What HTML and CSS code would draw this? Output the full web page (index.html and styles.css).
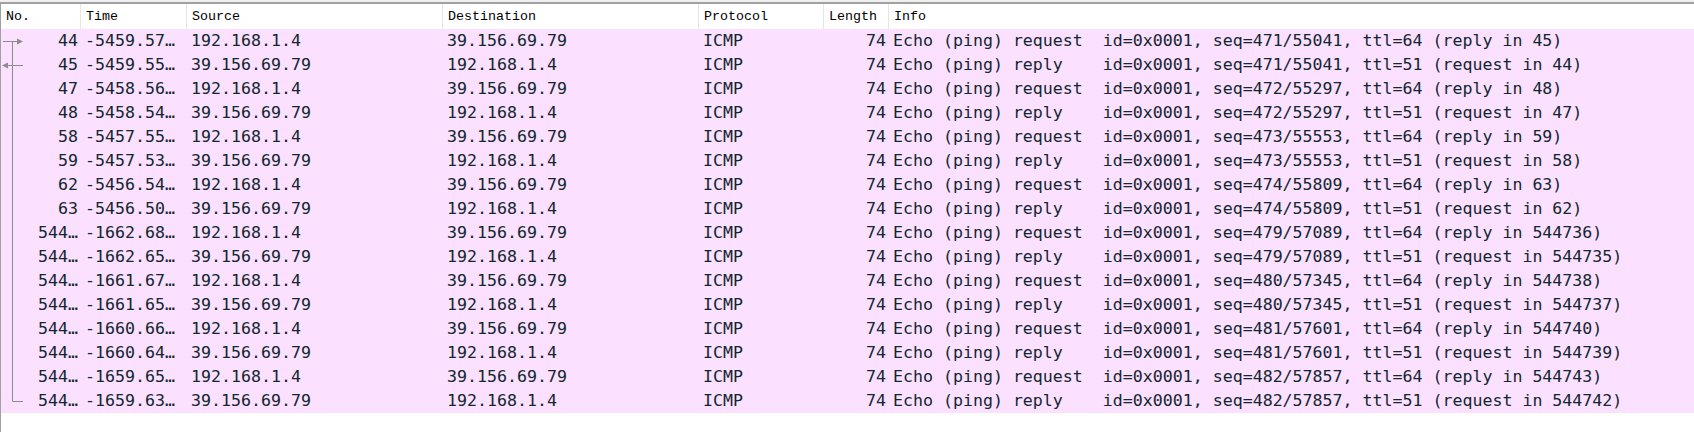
FILE: index.html
```html
<!DOCTYPE html>
<html>
<head>
<meta charset="utf-8">
<link rel="stylesheet" href="styles.css">
</head>
<body>
<div class="pane">
  <div class="row head">
    <div class="c">No.</div>
    <div class="c">Time</div>
    <div class="c">Source</div>
    <div class="c">Destination</div>
    <div class="c">Protocol</div>
    <div class="c">Length</div>
    <div class="c last">Info</div>
  </div>

  <div class="row pkt"><div class="c no"><svg class="rel" width="24" height="24"><line x1="2" y1="12.5" x2="17" y2="12.5"/><line x1="11.5" y1="12.5" x2="11.5" y2="24"/><polygon points="16,9.5 16,15.5 22,12.5"/></svg><span class="n">44</span></div><div class="c">-5459.57…</div><div class="c">192.168.1.4</div><div class="c">39.156.69.79</div><div class="c">ICMP</div><div class="c len">74</div><div class="c info">Echo (ping) request  id=0x0001, seq=471/55041, ttl=64 (reply in 45)</div></div>
  <div class="row pkt"><div class="c no"><svg class="rel" width="24" height="24"><line x1="6" y1="12.5" x2="22" y2="12.5"/><line x1="11.5" y1="0" x2="11.5" y2="24"/><polygon points="1,12.5 7,9.5 7,15.5"/></svg><span class="n">45</span></div><div class="c">-5459.55…</div><div class="c">39.156.69.79</div><div class="c">192.168.1.4</div><div class="c">ICMP</div><div class="c len">74</div><div class="c info">Echo (ping) reply    id=0x0001, seq=471/55041, ttl=51 (request in 44)</div></div>
  <div class="row pkt"><div class="c no"><svg class="rel" width="24" height="24"><line x1="11.5" y1="0" x2="11.5" y2="24"/></svg><span class="n">47</span></div><div class="c">-5458.56…</div><div class="c">192.168.1.4</div><div class="c">39.156.69.79</div><div class="c">ICMP</div><div class="c len">74</div><div class="c info">Echo (ping) request  id=0x0001, seq=472/55297, ttl=64 (reply in 48)</div></div>
  <div class="row pkt"><div class="c no"><svg class="rel" width="24" height="24"><line x1="11.5" y1="0" x2="11.5" y2="24"/></svg><span class="n">48</span></div><div class="c">-5458.54…</div><div class="c">39.156.69.79</div><div class="c">192.168.1.4</div><div class="c">ICMP</div><div class="c len">74</div><div class="c info">Echo (ping) reply    id=0x0001, seq=472/55297, ttl=51 (request in 47)</div></div>
  <div class="row pkt"><div class="c no"><svg class="rel" width="24" height="24"><line x1="11.5" y1="0" x2="11.5" y2="24"/></svg><span class="n">58</span></div><div class="c">-5457.55…</div><div class="c">192.168.1.4</div><div class="c">39.156.69.79</div><div class="c">ICMP</div><div class="c len">74</div><div class="c info">Echo (ping) request  id=0x0001, seq=473/55553, ttl=64 (reply in 59)</div></div>
  <div class="row pkt"><div class="c no"><svg class="rel" width="24" height="24"><line x1="11.5" y1="0" x2="11.5" y2="24"/></svg><span class="n">59</span></div><div class="c">-5457.53…</div><div class="c">39.156.69.79</div><div class="c">192.168.1.4</div><div class="c">ICMP</div><div class="c len">74</div><div class="c info">Echo (ping) reply    id=0x0001, seq=473/55553, ttl=51 (request in 58)</div></div>
  <div class="row pkt"><div class="c no"><svg class="rel" width="24" height="24"><line x1="11.5" y1="0" x2="11.5" y2="24"/></svg><span class="n">62</span></div><div class="c">-5456.54…</div><div class="c">192.168.1.4</div><div class="c">39.156.69.79</div><div class="c">ICMP</div><div class="c len">74</div><div class="c info">Echo (ping) request  id=0x0001, seq=474/55809, ttl=64 (reply in 63)</div></div>
  <div class="row pkt"><div class="c no"><svg class="rel" width="24" height="24"><line x1="11.5" y1="0" x2="11.5" y2="24"/></svg><span class="n">63</span></div><div class="c">-5456.50…</div><div class="c">39.156.69.79</div><div class="c">192.168.1.4</div><div class="c">ICMP</div><div class="c len">74</div><div class="c info">Echo (ping) reply    id=0x0001, seq=474/55809, ttl=51 (request in 62)</div></div>
  <div class="row pkt"><div class="c no"><svg class="rel" width="24" height="24"><line x1="11.5" y1="0" x2="11.5" y2="24"/></svg><span class="n">544…</span></div><div class="c">-1662.68…</div><div class="c">192.168.1.4</div><div class="c">39.156.69.79</div><div class="c">ICMP</div><div class="c len">74</div><div class="c info">Echo (ping) request  id=0x0001, seq=479/57089, ttl=64 (reply in 544736)</div></div>
  <div class="row pkt"><div class="c no"><svg class="rel" width="24" height="24"><line x1="11.5" y1="0" x2="11.5" y2="24"/></svg><span class="n">544…</span></div><div class="c">-1662.65…</div><div class="c">39.156.69.79</div><div class="c">192.168.1.4</div><div class="c">ICMP</div><div class="c len">74</div><div class="c info">Echo (ping) reply    id=0x0001, seq=479/57089, ttl=51 (request in 544735)</div></div>
  <div class="row pkt"><div class="c no"><svg class="rel" width="24" height="24"><line x1="11.5" y1="0" x2="11.5" y2="24"/></svg><span class="n">544…</span></div><div class="c">-1661.67…</div><div class="c">192.168.1.4</div><div class="c">39.156.69.79</div><div class="c">ICMP</div><div class="c len">74</div><div class="c info">Echo (ping) request  id=0x0001, seq=480/57345, ttl=64 (reply in 544738)</div></div>
  <div class="row pkt"><div class="c no"><svg class="rel" width="24" height="24"><line x1="11.5" y1="0" x2="11.5" y2="24"/></svg><span class="n">544…</span></div><div class="c">-1661.65…</div><div class="c">39.156.69.79</div><div class="c">192.168.1.4</div><div class="c">ICMP</div><div class="c len">74</div><div class="c info">Echo (ping) reply    id=0x0001, seq=480/57345, ttl=51 (request in 544737)</div></div>
  <div class="row pkt"><div class="c no"><svg class="rel" width="24" height="24"><line x1="11.5" y1="0" x2="11.5" y2="24"/></svg><span class="n">544…</span></div><div class="c">-1660.66…</div><div class="c">192.168.1.4</div><div class="c">39.156.69.79</div><div class="c">ICMP</div><div class="c len">74</div><div class="c info">Echo (ping) request  id=0x0001, seq=481/57601, ttl=64 (reply in 544740)</div></div>
  <div class="row pkt"><div class="c no"><svg class="rel" width="24" height="24"><line x1="11.5" y1="0" x2="11.5" y2="24"/></svg><span class="n">544…</span></div><div class="c">-1660.64…</div><div class="c">39.156.69.79</div><div class="c">192.168.1.4</div><div class="c">ICMP</div><div class="c len">74</div><div class="c info">Echo (ping) reply    id=0x0001, seq=481/57601, ttl=51 (request in 544739)</div></div>
  <div class="row pkt"><div class="c no"><svg class="rel" width="24" height="24"><line x1="11.5" y1="0" x2="11.5" y2="24"/></svg><span class="n">544…</span></div><div class="c">-1659.65…</div><div class="c">192.168.1.4</div><div class="c">39.156.69.79</div><div class="c">ICMP</div><div class="c len">74</div><div class="c info">Echo (ping) request  id=0x0001, seq=482/57857, ttl=64 (reply in 544743)</div></div>
  <div class="row pkt"><div class="c no"><svg class="rel" width="24" height="24"><line x1="11.5" y1="0" x2="11.5" y2="12.5"/><line x1="11.5" y1="12.5" x2="22" y2="12.5"/></svg><span class="n">544…</span></div><div class="c">-1659.63…</div><div class="c">39.156.69.79</div><div class="c">192.168.1.4</div><div class="c">ICMP</div><div class="c len">74</div><div class="c info">Echo (ping) reply    id=0x0001, seq=482/57857, ttl=51 (request in 544742)</div></div>
</div>
</body>
</html>
```

FILE: styles.css
```css
html, body {
  margin: 0;
  padding: 0;
  background: #ffffff;
}
body {
  width: 1694px;
  height: 434px;
  overflow: hidden;
  border-top: 2px solid #f0f0f0;
}
.pane {
  border-top: 2px solid #a0a0a0;
  border-left: 1px solid #a0a0a0;
  height: 430px;
  box-sizing: border-box;
}
.row {
  display: grid;
  grid-template-columns: 80px 106px 256px 256px 125px 65px 1fr;
}
.c {
  overflow: hidden;
  white-space: pre;
  box-sizing: border-box;
}
.head {
  height: 25px;
  background: #ffffff;
  font-family: "Liberation Mono", monospace;
  font-size: 13.33px;
  color: #000000;
}
.head .c {
  line-height: 25px;
  padding-left: 5px;
  border-right: 1px solid #e5e5e5;
}
.head .c.last {
  border-right: none;
}
.pkt {
  height: 24px;
  background: #fce0ff;
  color: #12272e;
  font-family: "DejaVu Sans Mono", monospace;
  font-size: 16.6px;
  line-height: 24px;
}
.pkt .c {
  padding-left: 4px;
}
.pkt .no {
  display: flex;
  align-items: flex-start;
  padding-left: 0;
  padding-right: 3px;
}
.pkt .no .n {
  margin-left: auto;
}
.rel {
  display: block;
  flex-shrink: 0;
}
.rel line {
  stroke: #8c8c8c;
  stroke-width: 1;
}
.rel polygon {
  fill: #8c8c8c;
}
.pkt .len {
  text-align: right;
  padding-right: 3px;
}
```
